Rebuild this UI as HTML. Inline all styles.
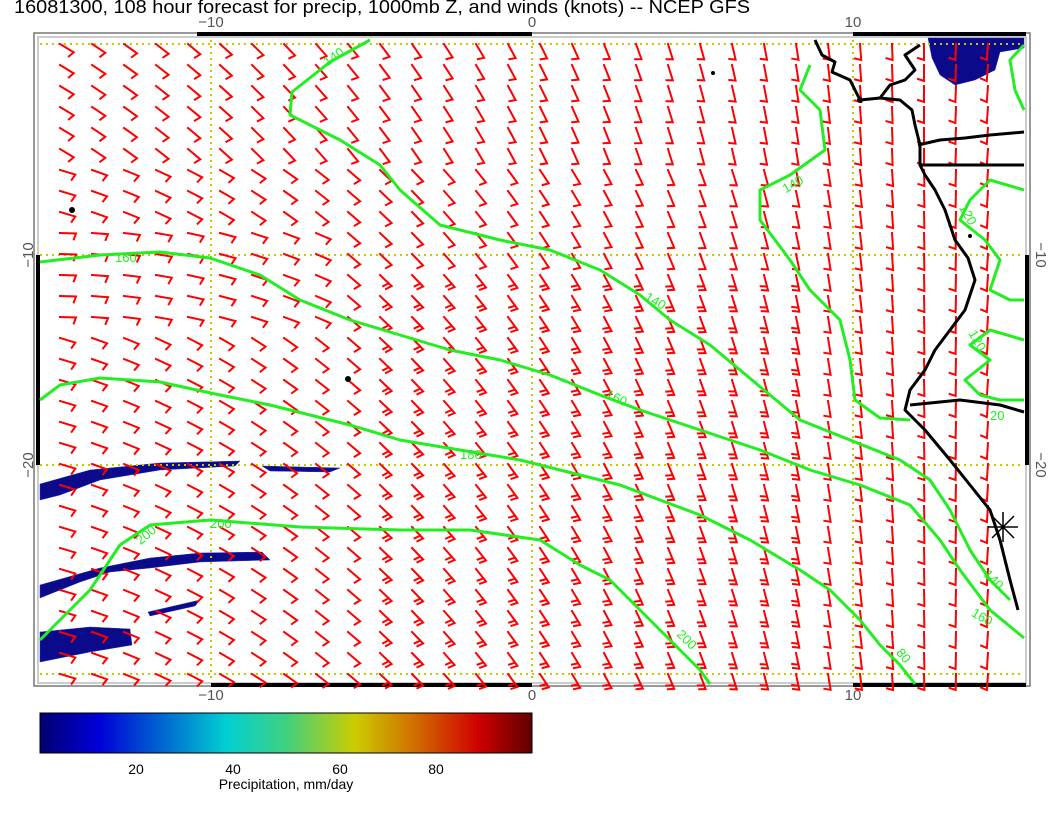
<!DOCTYPE html>
<html><head><meta charset="utf-8"><style>
html,body{margin:0;padding:0;background:#fff;width:1056px;height:816px;overflow:hidden}
svg{display:block}
text{font-family:"Liberation Sans",sans-serif}
</style></head><body>
<svg id="s" width="1056" height="816" viewBox="0 0 1056 816" xmlns="http://www.w3.org/2000/svg">
<defs>
<linearGradient id="cb" x1="0" x2="1" y1="0" y2="0">
<stop offset="0" stop-color="#000070"/>
<stop offset="0.12" stop-color="#0000d8"/>
<stop offset="0.24" stop-color="#0060d0"/>
<stop offset="0.38" stop-color="#00d0d0"/>
<stop offset="0.5" stop-color="#40d080"/>
<stop offset="0.64" stop-color="#cccc00"/>
<stop offset="0.76" stop-color="#d07000"/>
<stop offset="0.89" stop-color="#d00000"/>
<stop offset="1" stop-color="#600000"/>
</linearGradient>
</defs>
<text x="14" y="13" font-size="18" fill="#000" textLength="736" lengthAdjust="spacingAndGlyphs">16081300, 108 hour forecast for precip, 1000mb Z, and winds (knots) -- NCEP GFS</text>
<g font-size="15" fill="#555" text-anchor="middle">
<text x="211" y="27">−10</text><text x="532" y="27">0</text><text x="853" y="27">10</text>
<text x="211" y="700">−10</text><text x="532" y="700">0</text><text x="853" y="700">10</text>
<text transform="translate(33,255) rotate(-90)">−10</text>
<text transform="translate(33,465) rotate(-90)">−20</text>
<text transform="translate(1036,255) rotate(90)">−10</text>
<text transform="translate(1036,465) rotate(90)">−20</text>
</g>
<rect x="34" y="33" width="996" height="653" fill="none" stroke="#777" stroke-width="1.5"/>
<rect x="38" y="37" width="988" height="646" fill="none" stroke="#ccc" stroke-width="2"/>
<g fill="#000">
<rect x="197" y="32" width="335" height="4"/><rect x="853" y="32" width="173" height="4"/>
<rect x="211" y="683" width="321" height="4"/><rect x="853" y="683" width="173" height="4"/>
<rect x="36" y="255" width="4" height="210"/><rect x="1025" y="255" width="4" height="210"/>
</g>
<!-- precip -->
<g fill="#0a0a8a" stroke="#2030c0" stroke-width="0.5">
<path d="M40,484 L90,470 L160,463 L240,461 L235,466 L160,470 L100,480 L60,495 L40,500Z"/>
<path d="M262,466 L340,468 L330,472 L270,471Z"/>
<path d="M40,585 L100,568 L150,558 L200,553 L262,552 L270,560 L200,562 L150,568 L110,572 L80,582 L40,598Z"/>
<path d="M148,612 L200,600 L195,606 L150,616Z"/>
<path d="M40,632 L90,627 L130,629 L132,645 L90,652 L40,662Z"/>
<path d="M928,38 L1024,38 L1024,48 L1000,52 L995,70 L975,80 L955,85 L940,75 L932,58Z"/>
</g>
<!-- grid -->
<g stroke="#c8c800" stroke-width="2" stroke-dasharray="2,4" fill="none">
<path d="M40,44H1024M40,255H1024M40,465H1024M40,674H1024M211,40V682M532,40V682M853,40V682"/>
</g>
<g id="barbs" stroke="#ff0000" stroke-width="2" fill="none" stroke-linecap="square"></g>
<!-- contours -->
<g stroke="#22ee22" stroke-width="3" fill="none" stroke-linejoin="round">
<path d="M40,640 L48,632 L90,590 L120,545 L150,525 L210,520 L300,527 L400,530 L470,530 L540,540 L580,565 L610,580 L640,610 L670,640 L700,670 L710,684"/>
<path d="M40,400 L60,385 L100,378 L160,382 L220,395 L270,405 L350,425 L400,440 L460,450 L520,460 L560,470 L620,485 L660,500 L700,515 L750,540 L800,570 L830,590 L860,620 L880,645 L900,665 L915,684"/>
<path d="M40,262 L100,255 L160,252 L210,258 L260,275 L300,300 L350,320 L400,335 L450,350 L500,360 L550,375 L600,395 L640,410 L700,430 L760,450 L810,470 L860,485 L910,505 L940,540 L960,570 L990,610 L1024,638"/>
<path d="M370,40 L330,62 L292,92 L290,115 L340,140 L380,165 L400,190 L440,225 L500,240 L550,250 L600,270 L640,295 L670,320 L710,345 L740,370 L770,395 L800,420 L850,440 L900,460 L930,480 L950,510 L970,550 L990,580 L1010,600"/>
<path d="M810,65 L800,90 L820,110 L825,150 L790,175 L760,190 L760,220 L790,260 L810,290 L840,320 L850,360 L855,400 L880,418 L910,420"/>
<path d="M1024,45 L1010,60 L1015,90 L1024,110"/>
<path d="M1024,190 L990,180 L970,200 L960,220 L985,240 L1000,260 L990,290 L1010,300 L1024,300"/>
<path d="M1024,340 L990,330 L970,345 L990,360 L965,380 L980,395 L1000,400 L1024,400"/>
</g>
<g font-size="13" fill="#22ee22">
<text x="322" y="60" transform="rotate(-35 335 55)">140</text>
<text x="115" y="262">160</text>
<text x="645" y="305" transform="rotate(30 655 300)">140</text>
<text x="605" y="403" transform="rotate(25 618 400)">160</text>
<text x="460" y="459">180</text>
<text x="210" y="528">200</text>
<text x="135" y="540" transform="rotate(-40 145 535)">200</text>
<text x="676" y="645" transform="rotate(45 688 640)">200</text>
<text x="782" y="190" transform="rotate(-30 790 185)">140</text>
<text x="960" y="215" transform="rotate(60 966 210)">120</text>
<text x="970" y="340" transform="rotate(60 975 335)">120</text>
<text x="990" y="420">20</text>
<text x="985" y="580" transform="rotate(45 990 575)">140</text>
<text x="972" y="620" transform="rotate(30 980 615)">160</text>
<text x="895" y="662" transform="rotate(50 905 658)">80</text>
</g>
<!-- coast -->
<g stroke="#000" stroke-width="3" fill="none" stroke-linejoin="round">
<path d="M815,40 L822,55 L835,62 L832,72 L850,80 L860,100 L880,98 L900,100 L912,110 L915,125 L920,145 L920,165 L925,175 L935,190 L945,210 L955,240 L968,258 L975,280 L965,310 L950,330 L935,350 L925,370 L910,390 L905,410 L925,430 L950,460 L970,485 L990,510 L1000,540 L1010,580 L1018,610"/>
<path d="M918,145 L940,140 L965,138 L990,135 L1024,132"/>
<path d="M920,165 L960,165 L1024,165"/>
<path d="M910,405 L960,400 L1000,405 L1024,412"/>
<path d="M880,98 L890,85 L905,80 L915,70 L905,55 L920,45"/>
</g>
<g fill="#000"><circle cx="72" cy="210" r="3"/><circle cx="348" cy="379" r="3"/><circle cx="713" cy="73" r="2"/><circle cx="860" cy="100" r="3"/><circle cx="970" cy="236" r="2"/></g>
<g stroke="#000" stroke-width="1.5"><path d="M1003,512V542M988,527H1018M992,516L1014,538M1014,516L992,538"/></g>
<!-- colorbar -->
<rect x="40" y="713" width="492" height="40" fill="url(#cb)" stroke="#000" stroke-width="1"/>
<g font-size="14" fill="#000" text-anchor="middle">
<text x="136" y="774">20</text><text x="233" y="774">40</text><text x="340" y="774">60</text><text x="436" y="774">80</text>
<text x="286" y="789">Precipitation, mm/day</text>
</g>
</svg>
<script>
var g=document.getElementById('barbs'),s='';
for(var r=0;r<31;r++){var y=44+r*21;if(y>676)break;
for(var c=0;c<31;c++){var x=60+c*32;if(x>1015)break;
var t=(x-40)/960;var th=(15+t*80 - (r<6?-15*(1-t):0) - (r>8&&r<14&&t<0.3?15:0))*Math.PI/180;
var L=16,dx=Math.cos(th),dy=Math.sin(th);var ex=x+dx*L,ey=y+dy*L;
var bx=-dy,by=dx;var bl=6;
s+='M'+x.toFixed(1)+','+y.toFixed(1)+'L'+ex.toFixed(1)+','+ey.toFixed(1)+'l'+(bx*bl-dx*2).toFixed(1)+','+(by*bl-dy*2).toFixed(1);
if(t>0.35&&t<0.8&&r>10){var mx=ex-dx*4,my=ey-dy*4;s+='M'+mx.toFixed(1)+','+my.toFixed(1)+'l'+(bx*bl-dx*2).toFixed(1)+','+(by*bl-dy*2).toFixed(1);}
}}
var p=document.createElementNS('http://www.w3.org/2000/svg','path');p.setAttribute('d',s);g.appendChild(p);
</script>
</body></html>
